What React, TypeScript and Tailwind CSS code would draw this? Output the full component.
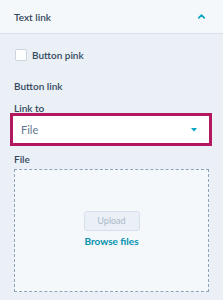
import { ChevronUp } from 'lucide-react';

// Sidebar-Panel: "Text link" Feldgruppe mit Checkbox, Link-Auswahl und Datei-Upload.

const font = { fontFamily: 'Lato, "Liberation Sans", sans-serif' };

export default function App() {
  return (
    <div className="w-[223px] h-[300px] overflow-hidden bg-[#eaf0f6] text-[#33475b]" style={font}>
      {/* ─── Header ─── */}
      <div className="h-[34px] box-border flex items-center justify-between pl-[14px] pr-[16px] bg-[#f5f8fa] border-b border-[#d7dfe8]">
        <span className="text-[10px] font-semibold leading-[12px]">Text link</span>
        <ChevronUp size={11} strokeWidth={3.5} className="text-[#00a4bd]" />
      </div>

      <div className="px-[14px] flex flex-col">
        {/* Checkbox */}
        <label className="mt-[15px] flex items-center gap-[5px]">
          <span className="w-[12px] h-[12px] ml-[1px] rounded-[2px] border border-[#cbd6e2] bg-white" />
          <span className="text-[10px] font-semibold leading-[12px]">Button pink</span>
        </label>

        <div className="mt-[19px] text-[10px] font-semibold leading-[12px]">Button link</div>

        <div className="mt-[10px] text-[10px] font-semibold leading-[12px]">Link to</div>

        {/* Select mit Markierung */}
        <div className="mt-[-1px] ml-[-4px] mr-[-3px] border-[3px] border-[#b3175f]">
          <div className="h-[27px] bg-white flex items-center justify-between pl-[8px] pr-[12px]">
            <span className="text-[11px] leading-[12px] text-[#5f7790]">File</span>
            <svg width="6" height="4" viewBox="0 0 6 4">
              <path d="M0 0 H6 L3 3.5 Z" fill="#00a4bd" />
            </svg>
          </div>
        </div>

        <div className="mt-[7px] text-[10px] font-semibold leading-[12px]">File</div>

        {/* Upload-Bereich */}
        <div className="mt-[4px] h-[123px] border border-dashed border-[#8ea3b9] bg-[#f5f8fa] flex flex-col items-center pt-[41px]">
          <div className="w-[56px] h-[20px] rounded-[3px] border border-[#d6e0ea] bg-[#eaf0f6] flex items-center justify-center text-[9px] text-[#a9b9c9]">
            Upload
          </div>
          <div className="mt-[4px] text-[10px] font-bold leading-[12px] text-[#0091ae]">Browse files</div>
        </div>
      </div>
    </div>
  );
}
